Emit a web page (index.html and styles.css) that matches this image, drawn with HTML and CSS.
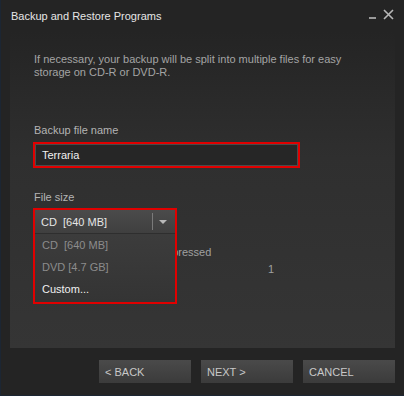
FILE: index.html
```html
<!DOCTYPE html>
<html lang="en">
<head>
    <meta charset="UTF-8">
    <meta name="viewport" content="width=device-width, initial-scale=1.0">
    <title>Backup and Restore Programs</title>
    <link rel="stylesheet" href="styles.css">
</head>
<body>
    <div class="window">
        <!-- Barra de título -->
        <div class="titlebar">
            <span class="title">Backup and Restore Programs</span>
            <div class="controls">
                <span class="minimize"></span>
                <svg class="close" width="11" height="11" viewBox="0 0 11 11">
                    <path d="M1 1 L10 10 M10 1 L1 10" stroke="#b8b8b8" stroke-width="1.6" fill="none"/>
                </svg>
            </div>
        </div>

        <!-- Contenido -->
        <div class="panel">
            <p class="desc">If necessary, your backup will be split into multiple files for easy storage on CD-R or DVD-R.</p>

            <label class="field-label">Backup file name</label>
            <div class="highlight name-box">
                <div class="text-input">Terraria</div>
            </div>

            <label class="field-label size-label">File size</label>
            <div class="size-row">
                <div class="highlight dropdown">
                    <div class="dropdown-head">
                        <span>CD&nbsp; [640 MB]</span>
                        <span class="sep"></span>
                        <span class="arrow"></span>
                    </div>
                    <div class="dropdown-list">
                        <div class="option muted">CD&nbsp; [640 MB]</div>
                        <div class="option muted">DVD [4.7 GB]</div>
                        <div class="option">Custom...</div>
                    </div>
                </div>
                <div class="compress">Compressed</div>
                <div class="count">1</div>
            </div>
        </div>

        <!-- Botones -->
        <div class="buttons">
            <button>&lt; BACK</button>
            <button>NEXT &gt;</button>
            <button>CANCEL</button>
        </div>
    </div>
</body>
</html>
```

FILE: styles.css
```css
body {
    margin: 0;
    background-color: #1c2633;
    font-family: "Liberation Sans", Arial, sans-serif;
}
.window {
    width: 403px;
    height: 395px;
    margin-left: 1px;
    background-color: #242424;
    display: flex;
    flex-direction: column;
}
.titlebar {
    height: 31px;
    display: flex;
    align-items: flex-start;
    justify-content: space-between;
    padding: 0 10px 0 10px;
}
.title {
    color: #e6e6e6;
    font-size: 11px;
    margin-top: 10px;
}
.controls {
    display: flex;
    align-items: flex-start;
    gap: 7px;
    margin-top: 9px;
}
.minimize {
    width: 7px;
    height: 2px;
    background-color: #9a9a9a;
    margin-top: 8px;
}
.panel {
    margin: 0 9px 0 9px;
    height: 317px;
    background: linear-gradient(to bottom, #242424 0%, #2f2f2f 40%, #353535 100%);
    padding: 22px 24px 0 24px;
    box-sizing: border-box;
}
.desc {
    color: #a4a4a4;
    font-size: 11px;
    line-height: 13px;
    margin: 0;
    width: 320px;
}
.field-label {
    display: block;
    color: #b4b4b4;
    font-size: 11px;
    margin-top: 45px;
}
.size-label {
    margin-top: 23px;
}
.highlight {
    border: 2px solid #e00000;
}
.name-box {
    width: 263px;
    margin-top: 6px;
    margin-left: -1px;
}
.text-input {
    border: 1px solid #4a4a4a;
    background-color: #262626;
    color: #f0f0f0;
    font-size: 11px;
    height: 20px;
    line-height: 20px;
    padding-left: 6px;
}
.size-row {
    position: relative;
    height: 110px;
    margin-top: 5px;
}
.dropdown {
    position: absolute;
    left: -1px;
    top: 0;
    width: 140px;
    background-color: #3a3a3a;
    z-index: 2;
}
.dropdown-head {
    height: 23px;
    display: flex;
    align-items: center;
    padding-left: 6px;
    background: linear-gradient(to bottom, #4b4b4b, #3f3f3f);
    border-bottom: 1px solid #2e2e2e;
    color: #e6e6e6;
    font-size: 11px;
}
.dropdown-head span:first-child {
    flex: 1;
}
.sep {
    width: 1px;
    height: 17px;
    background-color: #7a7a7a;
    margin-right: 6px;
}
.arrow {
    width: 0;
    height: 0;
    border-left: 4px solid transparent;
    border-right: 4px solid transparent;
    border-top: 4px solid #b8b8b8;
    margin-right: 8px;
}
.dropdown-list {
    padding: 0 0 2px 0;
    background: linear-gradient(to bottom, #3c3c3c, #343434);
}
.option {
    color: #f0f0f0;
    font-size: 11px;
    height: 22px;
    line-height: 22px;
    padding-left: 7px;
}
.option.muted {
    color: #8c8c8c;
}
.compress {
    position: absolute;
    left: 115px;
    top: 38px;
    color: #a0a0a0;
    font-size: 11px;
}
.count {
    position: absolute;
    left: 234px;
    top: 55px;
    color: #a0a0a0;
    font-size: 11px;
}
.buttons {
    display: flex;
    justify-content: flex-end;
    gap: 10px;
    padding: 12px 9px 0 0;
}
button {
    width: 92px;
    height: 23px;
    border: none;
    background: linear-gradient(to bottom, #4a4a4a, #3b3b3b);
    color: #c8c8c8;
    font-family: "Liberation Sans", Arial, sans-serif;
    font-size: 11px;
    text-align: left;
    padding-left: 6px;
}
```
